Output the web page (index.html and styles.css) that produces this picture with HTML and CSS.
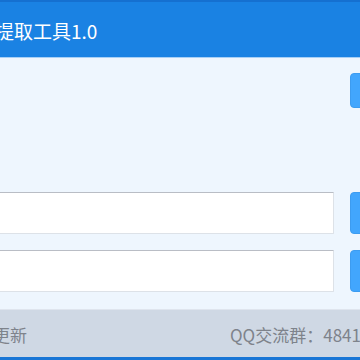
FILE: index.html
```html
<!DOCTYPE html>
<html lang="zh">
<head>
<meta charset="utf-8">
<link rel="stylesheet" href="styles.css">
</head>
<body>
<div class="window">
  <header class="titlebar">
    <span class="title">提取工具1.0</span>
  </header>
  <main class="content">
    <div class="row row-top">
      <button class="btn btn-small"></button>
    </div>
    <div class="row row-input">
      <input class="field" type="text">
      <button class="btn"></button>
    </div>
    <div class="row row-input second">
      <input class="field" type="text">
      <button class="btn"></button>
    </div>
  </main>
  <footer class="statusbar">
    <span class="status-left">检查更新</span>
    <span class="status-right">QQ交流群：484123456</span>
  </footer>
</div>
</body>
</html>
```
FILE: styles.css
```css
* { box-sizing: border-box; }
html, body { margin: 0; padding: 0; }
body {
  width: 360px;
  height: 360px;
  overflow: hidden;
  font-family: "Noto Sans CJK SC", "Noto Sans", sans-serif;
  background: #eef6fe;
}
.window {
  display: flex;
  flex-direction: column;
  height: 360px;
}
.titlebar {
  height: 58px;
  flex: none;
  background: #1a82e3;
  border-top: 2px solid #1570d0;
  border-bottom: 1px solid #a8d0f6;
  display: flex;
  align-items: center;
  color: #ffffff;
  font-size: 19px;
  overflow: hidden;
  white-space: nowrap;
}
.title {
  margin-left: -5px;
  margin-top: 2px;
  line-height: 1;
}
.content {
  flex: 1;
  display: flex;
  flex-direction: column;
  padding-top: 15px;
}
.row {
  display: flex;
  gap: 16px;
  margin-left: -20px;
  margin-right: -30px;
}
.row-top { justify-content: flex-end; }
.row-input { margin-top: 84px; height: 42px; }
.row-input.second { margin-top: 16px; }
.field {
  flex: 1;
  height: 42px;
  border: 1px solid #dde2e8;
  border-top-color: #b9bdc5;
  background: #ffffff;
  border-radius: 1px;
  padding: 0;
  outline: none;
}
.btn {
  width: 40px;
  height: 42px;
  flex: none;
  background: #42a6fd;
  border: 1px solid #3d9cf0;
  border-radius: 4px;
  padding: 0;
}
.btn-small { height: 35px; }
.statusbar {
  height: 51px;
  flex: none;
  background: #cfd8e4;
  border-top: 1px solid #dfe5ee;
  border-bottom: 3px solid #1976d6;
  display: flex;
  align-items: center;
  font-size: 17px;
  color: #7e838b;
  white-space: nowrap;
  overflow: hidden;
}
.status-left { margin-left: -41px; margin-top: 2px; }
.status-right { margin-left: 203px; margin-top: 2px; }
```
